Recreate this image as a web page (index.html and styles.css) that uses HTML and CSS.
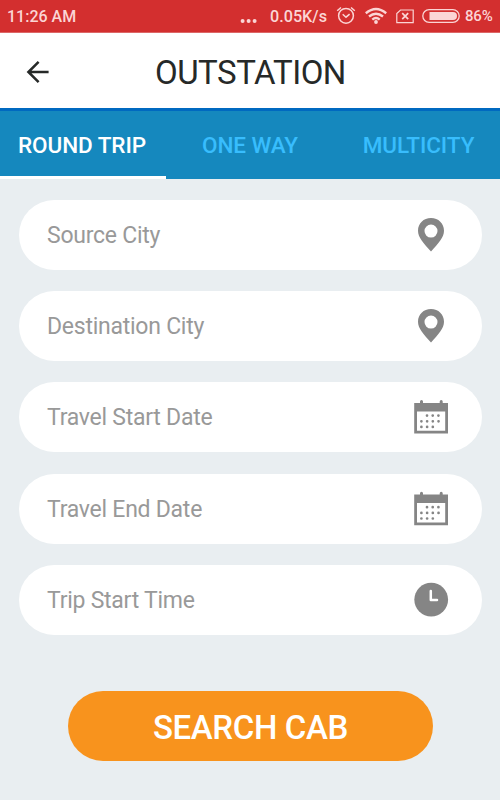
FILE: index.html
```html
<!DOCTYPE html>
<html lang="en">
<head>
<meta charset="utf-8">
<title>Outstation</title>
<link rel="stylesheet" href="styles.css">
</head>
<body>
<div class="status">
  <span class="time">11:26 AM</span>
  <svg class="dots" width="18" height="33" viewBox="0 0 18 33"><g fill="currentColor"><circle cx="3.6" cy="21" r="2"/><circle cx="9.6" cy="21" r="2"/><circle cx="15.6" cy="21" r="2"/></g></svg>
  <span class="speed">0.05K/s</span>
  <svg class="alarm" width="20" height="20" viewBox="0 0 20 20" fill="none" stroke="currentColor" stroke-width="1.5"><circle cx="10" cy="9.8" r="7.4"/><path d="M1.2 4.8 5 1.5M18.8 4.8 15 1.5M6.7 8.2l3.3 3 3.6-3"/></svg>
  <svg class="wifi" width="24" height="20" viewBox="0 0 24 20"><g fill="none" stroke="currentColor" stroke-width="2.4"><path d="M1.8 7.2Q12-1.2 22.2 7.2M5 10.5Q12 4.8 19 10.5M8.3 13.6Q12 10.4 15.7 13.6"/></g><circle cx="12" cy="16" r="1.9" fill="currentColor"/></svg>
  <svg class="sim" width="18" height="20" viewBox="0 0 18 20" fill="none" stroke="currentColor" stroke-width="1.2"><path d="M4.5 4H17.2V16.6H.8V7.5Z"/><path stroke-width="1.7" d="m6.2 7.2 6 6m0-6-6 6"/></svg>
  <svg class="battery" width="38" height="20" viewBox="0 0 38 20"><rect x=".8" y="3.7" width="36.4" height="12.6" rx="6.3" fill="none" stroke="currentColor" stroke-width="1.3"/><path fill="currentColor" d="M7.5 6H31a4 4 0 0 1 0 8H7.5Z"/></svg>
  <span class="percent">86%</span>
</div>
<header class="header">
  <svg class="back" width="24" height="24" viewBox="0 0 24 24" fill="none" stroke="currentColor" stroke-width="2.5"><path d="M22.6 12H2.4M12.6 1.8 2.4 12 12.6 22.2"/></svg>
  <h1 class="title">OUTSTATION</h1>
</header>
<nav class="tabs">
  <a class="tab active">ROUND TRIP</a>
  <a class="tab">ONE WAY</a>
  <a class="tab multi">MULTICITY</a>
</nav>
<main class="form">
  <div class="field"><span>Source City</span><svg class="icon" width="36" height="36" viewBox="0 0 36 36"><path fill="currentColor" fill-rule="evenodd" d="M18 1C10.5 1 5 6.5 5 13.7 5 20.5 10.5 26 18 34.5 25.5 26 31 20.5 31 13.7 31 6.5 25.5 1 18 1Zm0 6.6a6.5 6.5 0 1 1 0 13 6.5 6.5 0 0 1 0-13Z"/></svg></div>
  <div class="field"><span>Destination City</span><svg class="icon" width="36" height="36" viewBox="0 0 36 36"><path fill="currentColor" fill-rule="evenodd" d="M18 1C10.5 1 5 6.5 5 13.7 5 20.5 10.5 26 18 34.5 25.5 26 31 20.5 31 13.7 31 6.5 25.5 1 18 1Zm0 6.6a6.5 6.5 0 1 1 0 13 6.5 6.5 0 0 1 0-13Z"/></svg></div>
  <div class="field"><span>Travel Start Date</span><svg class="icon" width="36" height="36" viewBox="0 0 36 36"><path fill="currentColor" fill-rule="evenodd" d="M1.2 3.9H35V34.6H1.2ZM4 12.4V31.8H32.2V12.4Z"/><g stroke="currentColor" stroke-linecap="round" fill="none" stroke-width="3"><path d="M8.5 2.6V4.4M28.2 2.6V4.4"/><path stroke-width="2.7" d="M14 16.6h.01m5.7 0h.01m5.7 0h.01M8.4 22.3h.01m5.7 0h.01m5.7 0h.01m5.7 0h.01M8.4 27.9h.01m5.7 0h.01m5.7 0h.01"/></g></svg></div>
  <div class="field"><span>Travel End Date</span><svg class="icon" width="36" height="36" viewBox="0 0 36 36"><path fill="currentColor" fill-rule="evenodd" d="M1.2 3.4H35V34.3H1.2ZM4 12V31.5H32.2V12Z"/><g stroke="currentColor" stroke-linecap="round" fill="none" stroke-width="3"><path d="M8.5 2.3V4M28.2 2.3V4"/><path stroke-width="2.7" d="M14 16.2h.01m5.7 0h.01m5.7 0h.01M8.4 21.9h.01m5.7 0h.01m5.7 0h.01m5.7 0h.01M8.4 27.5h.01m5.7 0h.01m5.7 0h.01"/></g></svg></div>
  <div class="field"><span>Trip Start Time</span><svg class="icon" width="36" height="36" viewBox="0 0 36 36"><circle cx="18.2" cy="17.6" r="16.9" fill="currentColor"/><path d="M17.8 9v8.9h6.2" fill="none" stroke="#fff" stroke-width="2.5" stroke-linecap="round" stroke-linejoin="round"/></svg></div>
  <button class="search">SEARCH CAB</button>
</main>
</body>
</html>
```
FILE: styles.css
```css
* { box-sizing: border-box; }
body {
  margin: 0;
  height: 800px;
  background: #e9eef1;
  font-family: Roboto, sans-serif;
  overflow: hidden;
}
svg { display: block; flex: none; }
.status {
  height: 33px;
  background: #d32f2f;
  border-bottom: 1px solid #dc6767;
  color: #fbd5d5;
  display: flex;
  align-items: center;
  padding-left: 7px;
  font-size: 16px;
  font-weight: 500;
  white-space: nowrap;
}
.time { width: 232px; }
.dots { margin-right: 13px; }
.speed { width: 65.5px; font-size: 16.2px; }
.alarm { margin-right: 8px; }
.wifi { margin-right: 8px; }
.sim { margin-right: 8px; }
.battery { margin-right: 5.5px; }
.percent { font-size: 15px; letter-spacing: -0.2px; }
.header {
  height: 75px;
  background: #fff;
  color: #262928;
  display: flex;
  align-items: center;
  padding: 4px 0 0 26px;
}
.back { margin-top: -2px; }
.title {
  margin: 1px 0 0 105px;
  font-size: 33px;
  line-height: 40px;
  font-weight: 400;
  letter-spacing: -0.5px;
}
.tabs {
  height: 71px;
  background: #1588be;
  border-top: 3px solid #0069c0;
  display: grid;
  grid-template-columns: 166px 168px 166px;
  font-size: 22.5px;
  font-weight: 500;
  line-height: 27px;
  letter-spacing: -0.06px;
}
.tab {
  display: flex;
  justify-content: center;
  padding-top: 21px;
  color: #38bdfd;
  white-space: nowrap;
}
.active { color: #fff; border-bottom: 3px solid #fff; padding-right: 2px; }
.multi { padding-left: 3px; }
.form {
  padding: 21px 18px 0 19px;
  display: flex;
  flex-direction: column;
}
.field {
  height: 70px;
  margin-bottom: 21.2px;
  border-radius: 35px;
  background: #fff;
  color: #999;
  display: flex;
  align-items: center;
  justify-content: space-between;
  padding: 0 33px 0 28px;
  font-size: 23px;
  letter-spacing: -0.25px;
}
.field span { padding-top: 1px; }
.icon { color: #858585; }
.search {
  width: 365px;
  height: 70px;
  margin: 35px 0 0 49px;
  padding: 4px 0 0;
  border: 0;
  border-radius: 35px;
  background: #f8931d;
  color: #fff;
  font: 500 33px/40px Roboto, sans-serif;
  letter-spacing: -0.35px;
}
```
